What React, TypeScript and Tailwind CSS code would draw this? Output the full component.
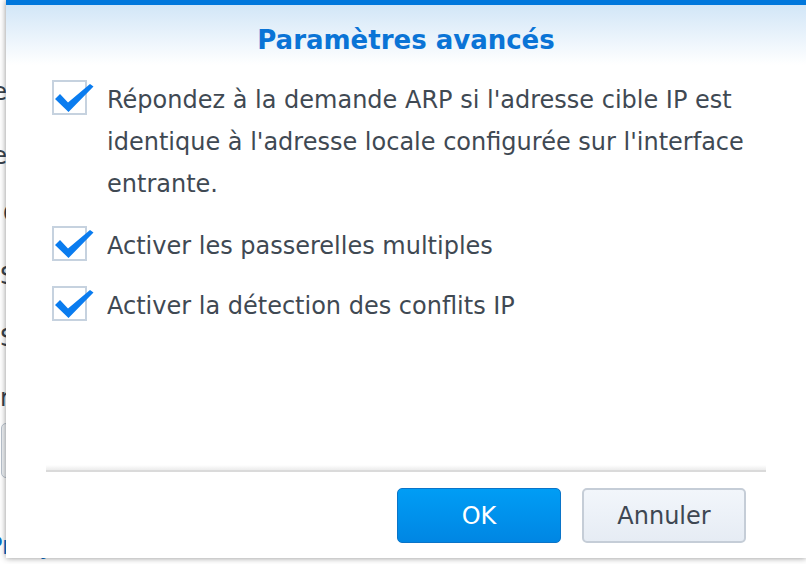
import React from "react";

const font = { fontFamily: '"DejaVu Sans", Verdana, sans-serif' };

function Check() {
  return (
    <div className="relative w-[35px] h-[35px] shrink-0 border-2 border-[#c6d2df] bg-white mt-[1px]">
      <svg
        className="absolute left-[-2px] top-[-2px] overflow-visible"
        width="44"
        height="36"
        viewBox="0 0 44 36"
      >
        <polygon points="3,19 8,14 16,22.5 38,4 41.5,6.5 16.5,32" fill="#0a7cef" />
      </svg>
    </div>
  );
}

function Row({ children, mt }: { children: React.ReactNode; mt: string }) {
  return (
    <div className={`flex items-start gap-[20px] ${mt}`}>
      <Check />
      <div className="text-[24px] leading-[42px] text-[#3f4953] whitespace-nowrap">{children}</div>
    </div>
  );
}

function BgLetter({ ch, h, mt }: { ch: string; h: number; mt: number }) {
  return (
    <div
      className="w-[7px] flex justify-end whitespace-nowrap text-[24px] leading-none text-[#3a434c]"
      style={{ height: h, marginTop: mt }}
    >
      <span>{ch}</span>
    </div>
  );
}

export default function App() {
  return (
    <div className="relative w-[806px] h-[564px] overflow-hidden bg-white" style={font}>
      {/* background window content */}
      <div className="flex flex-col">
        <BgLetter ch="Le" h={24} mt={80} />
        <BgLetter ch="te" h={24} mt={40} />
        <div className="ml-[3px] text-[24px] leading-none text-[#3a434c] h-[24px] mt-[34px]">C</div>
        <div className="ml-[0px] text-[24px] leading-none text-[#3a434c] h-[24px] mt-[38px]">S</div>
        <div className="ml-[0px] text-[24px] leading-none text-[#3a434c] h-[24px] mt-[38px]">S</div>
        <div className="ml-[0px] text-[24px] leading-none text-[#3a434c] h-[24px] mt-[36px]">r</div>
        <div className="ml-[1px] mt-[13px] w-[60px] h-[55px] rounded-[5px] border border-[#b8c2cd] bg-[#eef1f4]" />
        <div className="-ml-[12px] mt-[56px] text-[24px] leading-none text-[#0a6fc8]">Proxy</div>
      </div>

      {/* dialog */}
      <div className="absolute left-[6px] top-0 w-[800px] h-[558px] bg-white flex flex-col shadow-[0_0_6px_rgba(0,0,0,0.45)]">
        <div className="h-[5px] bg-[#0077dc]" />
        <div className="h-[60px] bg-gradient-to-b from-[#d2e6f7] to-white flex items-center justify-center pt-[10px]">
          <span className="text-[26px] font-bold text-[#0a74d6]">Paramètres avancés</span>
        </div>
        <div className="flex-1 flex flex-col pl-[46px] pt-[14px]">
          <Row mt="mt-0">
            Répondez à la demande ARP si l'adresse cible IP est
            <br />
            identique à l'adresse locale configurée sur l'interface
            <br />
            entrante.
          </Row>
          <Row mt="mt-[20px]">Activer les passerelles multiples</Row>
          <Row mt="mt-[18px]">Activer la détection des conflits IP</Row>
        </div>
        <div className="mx-[40px] h-[7px] bg-gradient-to-b from-white to-[#ececec] border-b-2 border-[#dadada]" />
        <div className="flex justify-end gap-[21px] pr-[60px] pt-[16px] pb-[15px]">
          <button className="w-[164px] h-[55px] rounded-[5px] border border-[#0a74c8] bg-gradient-to-b from-[#009df5] to-[#0086e3] text-white text-[24px]">
            OK
          </button>
          <button className="w-[164px] h-[55px] rounded-[5px] border-2 border-[#c5cdd7] bg-gradient-to-b from-[#f2f6fb] to-[#e6ecf4] text-[#3e4752] text-[24px]">
            Annuler
          </button>
        </div>
      </div>
    </div>
  );
}
